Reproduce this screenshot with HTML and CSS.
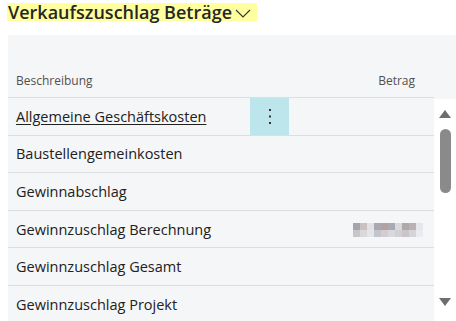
FILE: index.html
```html
<!DOCTYPE html>
<html lang="de">
<head>
    <meta charset="UTF-8">
    <meta name="viewport" content="width=device-width, initial-scale=1.0">
    <title>Verkaufszuschlag Beträge</title>
    <link rel="stylesheet" href="styles.css">
</head>
<body>

    <h1 class="title">
        <span class="mark">Verkaufszuschlag Beträge
            <svg class="chevron" width="16" height="9" viewBox="0 0 16 9"><path d="M1 1 L8 8 L15 1" fill="none" stroke="#333" stroke-width="1.1"/></svg>
        </span>
    </h1>

    <div class="panel">
        <div class="table">
            <div class="head">
                <div class="cell desc">Beschreibung</div>
                <div class="cell dots"></div>
                <div class="cell amount">Betrag</div>
            </div>
            <div class="row">
                <div class="cell desc"><a href="#">Allgemeine Geschäftskosten</a></div>
                <div class="cell dots active">
                    <svg width="4" height="16" viewBox="0 0 4 16"><rect x="1" y="1" width="2" height="2" fill="#333"/><rect x="1" y="7.5" width="2" height="2" fill="#333"/><rect x="1" y="14" width="2" height="2" fill="#333"/></svg>
                </div>
                <div class="cell amount"></div>
            </div>
            <div class="row">
                <div class="cell desc">Baustellengemeinkosten</div>
                <div class="cell dots"></div>
                <div class="cell amount"></div>
            </div>
            <div class="row">
                <div class="cell desc">Gewinnabschlag</div>
                <div class="cell dots"></div>
                <div class="cell amount"></div>
            </div>
            <div class="row">
                <div class="cell desc">Gewinnzuschlag Berechnung</div>
                <div class="cell dots"></div>
                <div class="cell amount">
                    <svg class="blur" width="70" height="14" viewBox="0 0 70 14">
                        <rect x="0" y="0" width="7" height="7" fill="#a4a4ac"/>
                        <rect x="7" y="0" width="7" height="7" fill="#cac2c2"/>
                        <rect x="14" y="0" width="7" height="7" fill="#e2e2e6"/>
                        <rect x="21" y="0" width="7" height="7" fill="#a8a9b1"/>
                        <rect x="28" y="0" width="7" height="7" fill="#b2a2a2"/>
                        <rect x="35" y="0" width="7" height="7" fill="#a9aab2"/>
                        <rect x="42" y="0" width="7" height="7" fill="#d9d9e0"/>
                        <rect x="49" y="0" width="7" height="7" fill="#b0a9a9"/>
                        <rect x="56" y="0" width="7" height="7" fill="#bab2b2"/>
                        <rect x="63" y="0" width="7" height="7" fill="#e6e7ec"/>
                        <rect x="0" y="7" width="7" height="7" fill="#c9c5c9"/>
                        <rect x="7" y="7" width="7" height="7" fill="#d9d9dd"/>
                        <rect x="14" y="7" width="7" height="7" fill="#e5e5e9"/>
                        <rect x="21" y="7" width="7" height="7" fill="#c4c5cc"/>
                        <rect x="28" y="7" width="7" height="7" fill="#d1cdd1"/>
                        <rect x="35" y="7" width="7" height="7" fill="#d9d9dd"/>
                        <rect x="42" y="7" width="7" height="7" fill="#d0d0d5"/>
                        <rect x="49" y="7" width="7" height="7" fill="#c9c5c9"/>
                        <rect x="56" y="7" width="7" height="7" fill="#d5d5d9"/>
                        <rect x="63" y="7" width="7" height="7" fill="#e9ebef"/>
                    </svg>
                </div>
            </div>
            <div class="row">
                <div class="cell desc">Gewinnzuschlag Gesamt</div>
                <div class="cell dots"></div>
                <div class="cell amount"></div>
            </div>
            <div class="row">
                <div class="cell desc">Gewinnzuschlag Projekt</div>
                <div class="cell dots"></div>
                <div class="cell amount"></div>
            </div>
        </div>

        <div class="scroll">
            <svg width="14" height="10" viewBox="0 0 14 10"><path d="M1 9 L7 1 L13 9 Z" fill="#6e6e6e"/></svg>
            <div class="thumb"></div>
            <div class="spacer"></div>
            <svg width="14" height="10" viewBox="0 0 14 10"><path d="M1 1 L7 9 L13 1 Z" fill="#6e6e6e"/></svg>
        </div>
    </div>

</body>
</html>
```

FILE: styles.css
```css
body {
    font-family: "Open Sans", Arial, sans-serif;
    margin: 0;
    background-color: #fff;
    color: #212121;
    height: 321px;
    overflow: hidden;
}
.title {
    margin: 0;
    padding: 3px 0 0 7px;
    font-size: 18px;
    font-weight: 600;
    line-height: 18px;
    color: #262626;
}
.mark {
    display: inline-flex;
    align-items: center;
    gap: 3px;
    background-color: #ffff9e;
    padding: 0 6px 0 1px;
    height: 18px;
}
.chevron {
    margin-top: 2px;
}
.panel {
    display: flex;
    margin: 14px 0 0 8px;
    background-color: #f5f6f8;
    height: 300px;
}
.table {
    width: 426px;
}
.head {
    display: flex;
    height: 63px;
    align-items: flex-end;
    font-size: 12px;
    color: #505050;
    border-bottom: 1px solid #dddee0;
    box-sizing: border-box;
    padding-bottom: 8px;
}
.row {
    display: flex;
    height: 37.6px;
    box-sizing: border-box;
    align-items: stretch;
    border-bottom: 1px solid #dddee0;
    font-size: 14.5px;
}
.cell {
    display: flex;
    align-items: center;
}
.desc {
    width: 242px;
    padding-left: 8px;
    box-sizing: border-box;
    white-space: nowrap;
}
.desc a {
    color: #212121;
    text-decoration: underline;
    text-underline-offset: 2px;
}
.dots {
    width: 39px;
    justify-content: center;
}
.dots.active {
    background-color: #bde6ec;
}
.amount {
    flex: 1;
    justify-content: flex-end;
    padding-right: 18px;
}
.head .amount {
    padding-right: 19px;
}
.blur {
    margin-right: -7px;
    margin-top: 2px;
}
.scroll {
    width: 22px;
    margin-top: 64px;
    background-color: #fff;
    display: flex;
    flex-direction: column;
    align-items: center;
    padding-top: 10px;
    box-sizing: border-box;
    height: 236px;
}
.thumb {
    width: 11px;
    height: 64px;
    margin-top: 10px;
    border-radius: 6px;
    background-color: #8a8a8a;
}
.spacer {
    flex: 1;
    max-height: 104px;
}
```
